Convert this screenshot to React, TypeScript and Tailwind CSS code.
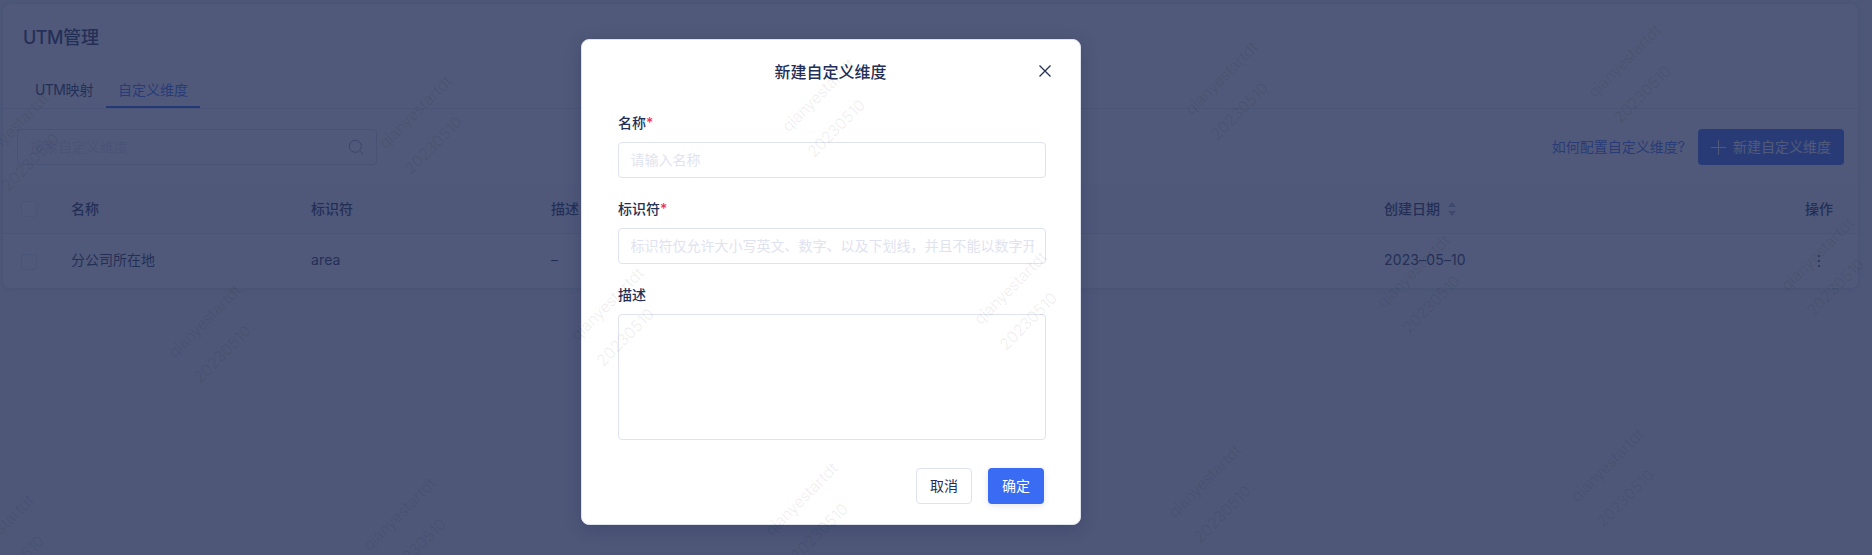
import React from "react";

const marks: [number, number][] = [
  [12, 129], [415, 112], [818, 95], [1221, 78], [1624, 61],
  [204, 321], [607, 304], [1010, 288], [1413, 271], [1817, 254],
  [-3, 531], [399, 514], [801, 499], [1204, 481], [1607, 465],
];

function Watermark() {
  return (
    <div className="pointer-events-none absolute inset-0 overflow-hidden text-[16px] leading-none text-black/[0.065]">
      {marks.map(([x, y]) => (
        <React.Fragment key={`${x}-${y}`}>
          <span className="absolute -translate-x-1/2 -translate-y-1/2 -rotate-45 tracking-[-0.02em] whitespace-nowrap" style={{ left: x, top: y }}>
            qianyestartdt
          </span>
          <span className="absolute -translate-x-1/2 -translate-y-1/2 -rotate-45 tracking-[-0.02em] whitespace-nowrap" style={{ left: x + 18, top: y + 33 }}>
            20230510
          </span>
        </React.Fragment>
      ))}
    </div>
  );
}

function Checkbox() {
  return <span className="block size-4 rounded-[3px] border border-[#dfe3f0] bg-white" />;
}

function Field({ label, required, children, className = "" }: { label: string; required?: boolean; children: React.ReactNode; className?: string }) {
  return (
    <div className={className}>
      <div className="mb-2 h-[22px] text-sm leading-[22px] font-medium">
        {label}
        {required && <span className="text-[#f5325c]">*</span>}
      </div>
      {children}
    </div>
  );
}

function Page() {
  return (
    <div className="h-full bg-[#f4f6fa] pt-1 pr-[14px] pl-[3px]">
      <div className="h-[284px] rounded-md bg-white shadow-[0_1px_8px_rgba(36,47,87,0.16),0_0_1px_rgba(36,47,87,0.3)]">
        <h1 className="h-[68px] px-5 text-lg leading-[67px] font-medium">
          <span className="tracking-[-0.03em]">UTM</span>管理
        </h1>
        <div className="flex h-[37px] border-b border-[#dfe3f0] pl-5 text-sm leading-9">
          <div className="w-[83px] px-3 whitespace-nowrap">
            <span className="tracking-[-0.04em]">UTM</span>映射
          </div>
          <div className="border-b-2 border-[#2b5cf0] px-3 text-[#3b6cf5]">自定义维度</div>
        </div>
        <div className="flex h-[76px] items-center justify-between pr-[14px] pl-[14px] text-sm">
          <div className="flex h-9 w-[360px] items-center justify-between rounded border border-[#d5daea] pr-3 pl-3">
            <span className="text-[#dfe3f0]">搜索自定义维度</span>
            <svg className="size-4" viewBox="0 0 16 16" fill="none" stroke="#8f98b8" strokeWidth="1">
              <circle cx="7.3" cy="7.3" r="6" />
              <path d="m11.7 11.7 3.3 3.3" />
            </svg>
          </div>
          <div className="flex items-center gap-[13px]">
            <span className="text-[#3b6cf5]">如何配置自定义维度?</span>
            <div className="flex h-9 w-[146px] items-center justify-center gap-[7px] rounded bg-[#3a6bf3] text-white">
              <svg className="size-[15px]" viewBox="0 0 15 15" stroke="white" strokeWidth="1">
                <path d="M7.5 0v15M0 7.5h15" />
              </svg>
              新建自定义维度
            </div>
          </div>
        </div>
        <div className="grid h-[49px] grid-cols-[68px_240px_240px_833px_1fr] items-center border-b border-[#dfe3f0] bg-[#f7f9fc] text-sm font-medium">
          <div className="pl-[18px]"><Checkbox /></div>
          <div>名称</div>
          <div>标识符</div>
          <div>描述</div>
          <div className="flex items-center justify-between pr-[25px]">
            <span className="flex items-center gap-2">
              创建日期
              <svg className="h-[14px] w-2" viewBox="0 0 8 14" fill="#a9b0c8">
                <path d="M4 0l4 5H0zM4 14l4-5H0z" />
              </svg>
            </span>
            <span>操作</span>
          </div>
        </div>
        <div className="grid h-[54px] grid-cols-[68px_240px_240px_833px_1fr] items-center text-sm">
          <div className="pt-px pl-[18px]"><Checkbox /></div>
          <div className="pb-[3px]">分公司所在地</div>
          <div className="pb-[3px] tracking-[0.01em]">area</div>
          <div className="pb-[3px]">–</div>
          <div className="flex items-center justify-between pr-[38px]">
            <span className="pb-[3px] tracking-[0.01em]">2023–05–10</span>
            <svg className="h-3 w-[2px]" viewBox="0 0 2 12" fill="#5d6788">
              <path d="M0 0h2v2H0zM0 5h2v2H0zM0 10h2v2H0z" />
            </svg>
          </div>
        </div>
      </div>
    </div>
  );
}

function Dialog() {
  return (
    <div className="mt-[39px] ml-[581px] h-[486px] w-[500px] rounded-lg border border-[#dfe3f0] bg-white pt-5 shadow-[0_4px_16px_rgba(36,47,87,0.3)]">
      <div className="relative h-6 pr-px text-center text-base leading-6 font-medium">
        新建自定义维度
        <svg className="absolute top-[5px] right-[29px] size-3" viewBox="0 0 12 12" stroke="#242f57" strokeWidth="1.3">
          <path d="M.5.5l11 11M11.5.5l-11 11" />
        </svg>
      </div>
      <div className="w-[464px] pt-7 pl-9">
        <Field label="名称" required>
          <div className="h-9 rounded border border-[#dfe3f0] px-[11.5px] text-sm leading-[34px] text-[#dfe3f0]">请输入名称</div>
        </Field>
        <Field label="标识符" required className="mt-5">
          <div className="h-9 rounded border border-[#dfe3f0] px-[11.5px] text-sm leading-[34px] text-[#dfe3f0]">
            <div className="w-[403px] overflow-hidden whitespace-nowrap">标识符仅允许大小写英文、数字、以及下划线，并且不能以数字开头</div>
          </div>
        </Field>
        <Field label="描述" className="mt-5">
          <div className="h-[126px] rounded border border-[#dfe3f0]" />
        </Field>
      </div>
      <div className="mt-7 flex justify-end gap-4 pr-9 text-center text-sm">
        <div className="h-9 w-14 rounded border border-[#dfe3f0] leading-[34px]">取消</div>
        <div className="h-9 w-14 rounded bg-[#3a6bf3] leading-9 text-white shadow-[0_2px_6px_rgba(36,47,87,0.12)]">确定</div>
      </div>
    </div>
  );
}

export default function App() {
  return (
    <div className="relative h-[555px] w-[1872px] overflow-hidden font-['Inter','Noto_Sans_CJK_SC',sans-serif] text-[#242f57]">
      <Page />
      <div className="absolute inset-0 flex items-start bg-[#242f57]/80">
        <Dialog />
      </div>
      <Watermark />
    </div>
  );
}
